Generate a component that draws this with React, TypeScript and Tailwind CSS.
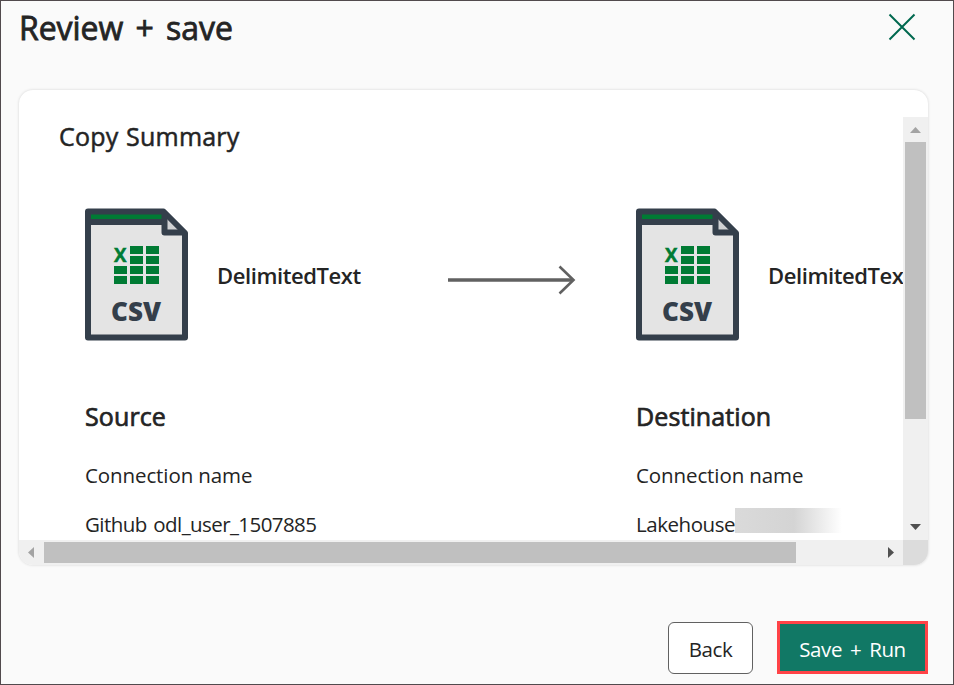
import React from "react";

function CsvIcon() {
  return (
    <svg width="104" height="134" viewBox="0 0 104 134" className="block shrink-0">
      <path d="M3 3H79L101 25V130H3Z" fill="#e4e4e4" />
      <path d="M3 3H79V13H3Z" fill="#007b34" />
      <path d="M5 11H80V17H5Z" fill="#343f4b" />
      <path d="M81 8L98 25H81Z" fill="#cfd1d3" />
      <path d="M3 3.500H78.500L100 25V129.500H3Z" fill="none" stroke="#343f4b" strokeWidth="6" strokeLinejoin="round" />
      <path d="M79.500 5V24.500H99" fill="none" stroke="#343f4b" strokeWidth="6" strokeLinejoin="round" />
      <path d="M29 58h13v8H29zM29 68h13v8H29zM45 38h13v8H45zM45 48h13v8H45zM45 58h13v8H45zM45 68h13v8H45zM61 38h13v8H61zM61 48h13v8H61zM61 58h13v8H61zM61 68h13v8H61z" fill="#007b34" />
      <text x="29" y="53.500" textLength="12.500" lengthAdjust="spacingAndGlyphs" fill="#007b34" stroke="#007b34" strokeWidth="0.500" fontSize="19" className="font-['Open_Sans',sans-serif] font-bold">X</text>
      <text x="26" y="113" textLength="50" lengthAdjust="spacingAndGlyphs" fill="#343f4b" fontSize="26.500" className="font-['Open_Sans',sans-serif] font-extrabold">CSV</text>
    </svg>
  );
}

function FormatCell() {
  return (
    <div className="flex h-[134px] items-start">
      <CsvIcon />
      <span className="ml-[28px] mt-[51px] text-[22px] font-semibold leading-8 tracking-[-0.42px]">DelimitedText</span>
    </div>
  );
}

export default function App() {
  return (
    <div className="flex h-[685px] w-[954px] flex-col overflow-hidden border border-[#514a4d] bg-[#fafafa] font-['Open_Sans','Noto_Sans',sans-serif] text-[#242424]">
      <header className="flex h-[89px] shrink-0 items-start justify-between pl-[18px] pr-9">
        <h1 className="mt-[7px] whitespace-nowrap text-[32px] font-normal leading-10 tracking-[-0.05px] [-webkit-text-stroke:0.8px_#242424] [word-spacing:4px]">Review + save</h1>
        <svg width="30" height="30" viewBox="0 0 30 30" className="mt-[11px]">
          <path d="M2.500 2.500L27.500 27.500M27.500 2.500L2.500 27.500" stroke="#00684f" strokeWidth="2" fill="none" />
        </svg>
      </header>

      <main className="ml-[18px] flex h-[475px] w-[909px] shrink-0 flex-col overflow-hidden rounded-[14px] bg-white shadow-[0_0_3px_rgba(0,0,0,0.16)]">
        <div className="flex h-[450px] shrink-0">
          <div className="h-[450px] w-[884px] overflow-hidden whitespace-nowrap">
            <h2 className="ml-10 mt-[29px] text-[25px] font-normal leading-[34px] tracking-[0.2px] [-webkit-text-stroke:0.500px_#242424] [word-spacing:1px]">Copy Summary</h2>
            <div className="ml-[66px] mt-[55px] flex">
              <div className="w-[362px] shrink-0"><FormatCell /></div>
              <svg width="130" height="32" viewBox="0 0 130 32" className="mr-[59px] mt-[56px] shrink-0">
                <path d="M1 16H126" stroke="#616161" strokeWidth="3.500" fill="none" />
                <path d="M112.500 2.500L126.500 16L112.500 29.500" stroke="#616161" strokeWidth="2.600" fill="none" />
              </svg>
              <div className="shrink-0"><FormatCell /></div>
            </div>
            <div className="ml-[66px] mt-[57px] flex text-[20.500px]">
              <section className="w-[551px] shrink-0">
                <h3 className="text-[25px] font-normal leading-[34px] tracking-[0.1px] [-webkit-text-stroke:0.700px_#242424]">Source</h3>
                <p className="mt-[27px] leading-[30px] tracking-[-0.1px]">Connection name</p>
                <p className="mt-[19px] leading-[30px] tracking-[-0.58px] [word-spacing:2px]">Github odl_user_1507885</p>
              </section>
              <section className="shrink-0">
                <h3 className="text-[25px] font-normal leading-[34px] tracking-[0.1px] [-webkit-text-stroke:0.700px_#242424]">Destination</h3>
                <p className="mt-[27px] leading-[30px] tracking-[-0.1px]">Connection name</p>
                <div className="mt-[19px] flex h-[30px] leading-[30px]">
                  <p className="w-[99px] tracking-[-0.45px]">Lakehouse</p>
                  <div className="mt-[-1px] h-[25px] w-[107px] bg-linear-to-r from-[#dadada] via-[#d4d4d4] via-55% to-white" />
                </div>
              </section>
            </div>
          </div>
          <div className="mt-[27px] flex h-[423px] w-[25px] flex-col items-center bg-[#f0f0f0]">
            <svg width="25" height="25" viewBox="0 0 25 25" className="shrink-0"><path d="M7 16L12.500 10L18 16Z" fill="#a3a3a3" /></svg>
            <div className="h-[277px] w-[21px] shrink-0 bg-[#c0c0c0]" />
            <svg width="25" height="25" viewBox="0 0 25 25" className="mt-auto shrink-0"><path d="M7 9L12.500 15L18 9Z" fill="#505050" /></svg>
          </div>
        </div>
        <div className="flex h-[25px] shrink-0 items-center bg-[#f0f0f0]">
          <svg width="25" height="25" viewBox="0 0 25 25"><path d="M15 7L9 12.500L15 18Z" fill="#a3a3a3" /></svg>
          <div className="h-[21px] w-[752px] bg-[#c0c0c0]" />
          <svg width="25" height="25" viewBox="0 0 25 25" className="ml-auto"><path d="M10 7L16 12.500L10 18Z" fill="#505050" /></svg>
          <div className="h-[25px] w-[25px] bg-[#dcdcdc]" />
        </div>
      </main>

      <footer className="mt-[56px] flex h-[53px] shrink-0 items-start justify-end gap-6 pr-[25px] text-[20.500px]">
        <button className="mt-px flex h-[52px] w-[85px] items-center justify-center rounded-md border border-[#616161] bg-white pt-[2px] tracking-[-0.4px]">Back</button>
        <button className="flex h-[53px] w-[151px] items-center justify-center whitespace-nowrap border-[3px] border-[#ff4347] bg-[#117865] pt-[3px] tracking-[-0.4px] text-white [word-spacing:3px]">Save + Run</button>
      </footer>
    </div>
  );
}
